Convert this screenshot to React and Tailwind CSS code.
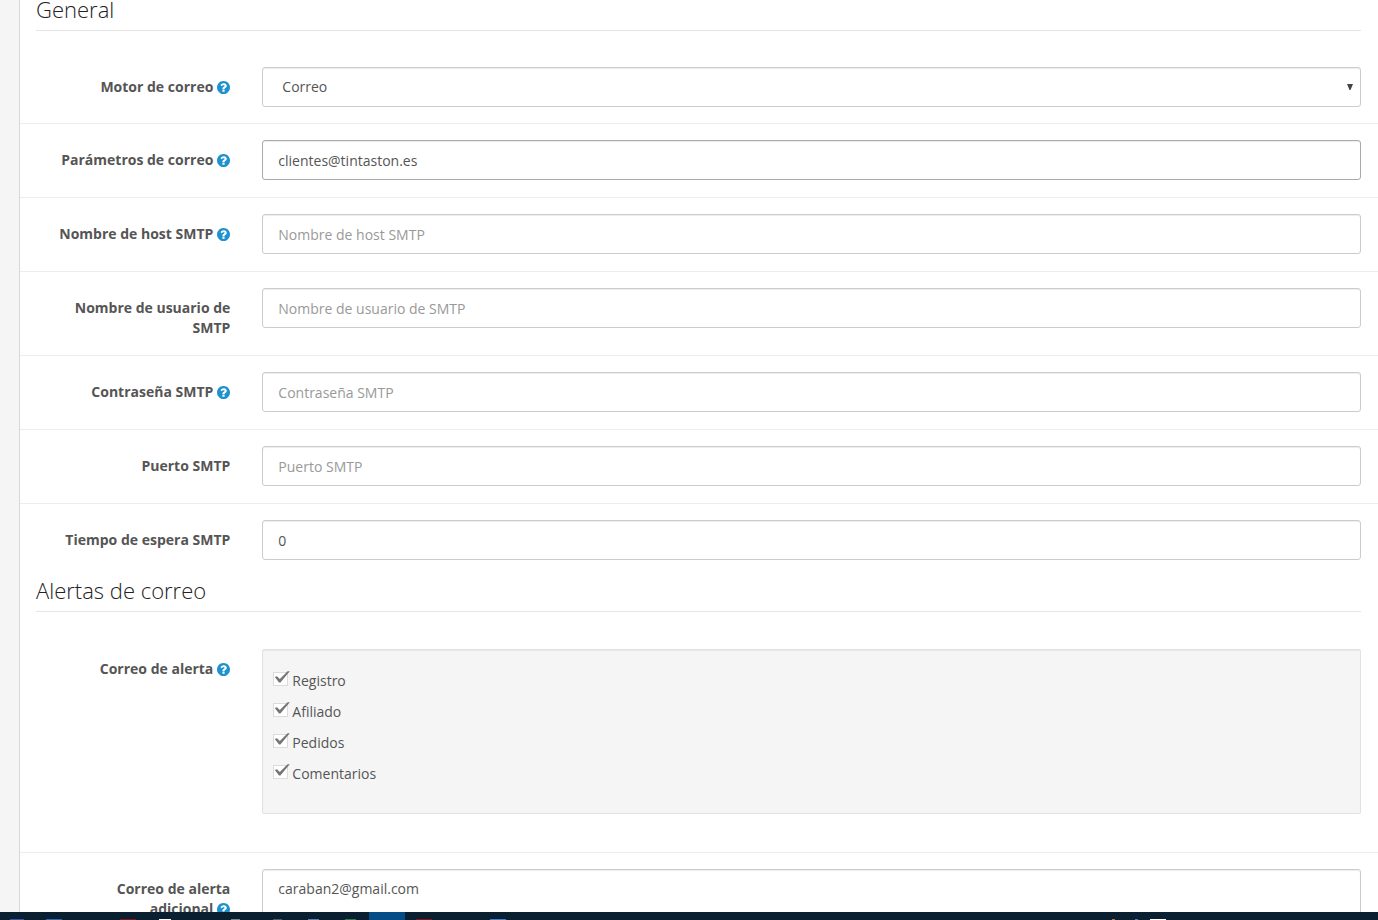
import React, { useState } from "react"

const smtpFields = [
  { id: "parameter", label: "Parámetros de correo", help: true, value: "clientes@tintaston.es", focused: true },
  { id: "host", label: "Nombre de host SMTP", help: true, placeholder: "Nombre de host SMTP" },
  { id: "username", label: "Nombre de usuario de SMTP", placeholder: "Nombre de usuario de SMTP" },
  { id: "password", label: "Contraseña SMTP", help: true, placeholder: "Contraseña SMTP" },
  { id: "port", label: "Puerto SMTP", placeholder: "Puerto SMTP" },
  { id: "timeout", label: "Tiempo de espera SMTP", value: "0" },
]

const alertOptions = ["Registro", "Afiliado", "Pedidos", "Comentarios"]

// Top edges of the taskbar icons
const taskbarLeft = [
  "ml-[10px] w-[14px] h-px bg-[#3f51a5]",
  "ml-[22px] w-[16px] h-px bg-[#2f66b5]",
  "ml-[58px] w-[16px] h-px bg-[#8c101a]",
  "ml-[23px] w-[12px] h-px bg-white",
  "ml-[60px] w-[9px] h-px bg-[#7b858c]",
  "ml-[33px] w-[9px] h-px bg-[#4f5d68]",
  "ml-[26px] w-[11px] h-px bg-[#5b7fae]",
  "ml-[26px] w-[11px] h-px bg-[#2f7a4a]",
  "ml-[13px] w-[36px] h-2 bg-[#044d86]",
  "ml-[11px] w-[16px] h-px bg-[#8c101a]",
  "ml-[58px] w-[16px] h-px bg-[#3f7ccb]",
]

const taskbarRight = [
  "w-[3px] h-px bg-[#b5793f]",
  "ml-[20px] w-[3px] h-px bg-[#5576b5]",
  "ml-[12px] w-[16px] h-px bg-white",
]

const inputClass =
  "block w-full h-10 rounded-[3px] border bg-white px-[15px] text-sm text-[#555] placeholder-[#999] shadow-[inset_0_1px_1px_rgba(0,0,0,0.075)] outline-none"

function HelpIcon() {
  return (
    <svg viewBox="128 128 1536 1536" className="inline-block size-[13px] ml-1 align-[-2px] fill-[#1e91cf]" aria-hidden="true">
      <path d="M1024 1376v-192q0-14-9-23t-23-9h-192q-14 0-23 9t-9 23v192q0 14 9 23t23 9h192q14 0 23-9t9-23zm256-672q0-88-55.5-163t-138.5-116-170-41q-243 0-371 213-15 24 8 42l132 100q7 6 19 6 16 0 25-12 53-68 86-92 34-24 86-24 48 0 85.5 26t37.5 59q0 38-20 61t-68 45q-63 28-115.5 86.5t-52.5 125.5v36q0 14 9 23t23 9h192q14 0 23-9t9-23q0-19 21.5-49.5t54.5-49.5q32-18 49-28.5t46-35 44.5-48 28-60.5 12.5-81zm384 192q0 209-103 385.5t-279.5 279.5-385.5 103-385.5-103-279.5-279.5-103-385.5 103-385.5 279.5-279.5 385.5-103 385.5 103 279.5 279.5 103 385.5z" />
    </svg>
  )
}

function Legend({ children }) {
  return (
    <h2 className="ml-4 mr-[17px] pb-3 border-b border-[#e5e5e5] text-[22px] leading-[18px] font-light text-[#222]">
      {children}
    </h2>
  )
}

function Row({ id, label, help, first, children }) {
  const Label = id ? "label" : "div"
  const words = label.split(" ")
  const lastWord = words.pop()

  return (
    <div className={`flex ${first ? "pt-9 pb-4" : "pt-4 pb-[17px] border-t border-[#ededed]"}`}>
      <Label htmlFor={id} className="w-1/6 shrink-0 px-4 pt-2.5 text-right text-sm leading-5 font-bold text-[#555]">
        {words.join(" ")}{" "}
        {/* keep the help icon on the same line as the last word */}
        <span className="whitespace-nowrap">
          {lastWord}
          {help && <HelpIcon />}
        </span>
      </Label>
      <div className="flex-1 min-w-0 pl-4 pr-[17px]">{children}</div>
    </div>
  )
}

function AlertCheckbox({ label }) {
  const [checked, setChecked] = useState(true)

  return (
    <label className="flex items-center gap-1 text-sm leading-5">
      <span className="relative block w-[15px] h-3.5 shrink-0 -mt-1">
        <input
          type="checkbox"
          checked={checked}
          onChange={() => setChecked(!checked)}
          className="block w-[15px] h-3.5 appearance-none border border-[#dcdcdc] bg-white"
        />
        {checked && (
          <svg viewBox="0 0 16 16" className="absolute left-px -top-0.5 size-4 pointer-events-none" aria-hidden="true">
            <path d="M0.8 7 3 6.2 5.8 9 13.6 1.200 15.8 1.200 6.400 12.600 5 12.600Z" fill="#757575" />
          </svg>
        )}
      </span>
      {label}
    </label>
  )
}

function App() {
  return (
    <div className="h-screen flex flex-col bg-[#f5f5f5] font-['Open_Sans',sans-serif] text-[#555]">
      <main className="flex-1 min-h-0 overflow-hidden ml-[19px] border-l border-[#d8d8d8] bg-white">
        <form>
          <Legend>General</Legend>
          <Row id="engine" label="Motor de correo" help first>
            <div className="relative">
              <select id="engine" className={`${inputClass} appearance-none border-[#ccc] pl-[19px]`}>
                <option>Correo</option>
              </select>
              <svg viewBox="0 0 6 6" className="absolute right-2 top-[17px] size-1.5 fill-[#444] pointer-events-none" aria-hidden="true">
                <path d="M0 0H6L3.500 6H2.500Z" />
              </svg>
            </div>
          </Row>
          {smtpFields.map((field) => (
            <Row key={field.id} id={field.id} label={field.label} help={field.help}>
              <input
                id={field.id}
                type="text"
                defaultValue={field.value}
                placeholder={field.placeholder}
                className={`${inputClass} ${field.focused ? "border-[#aaa]" : "border-[#ccc]"}`}
              />
            </Row>
          ))}

          <div className="pt-1">
            <Legend>Alertas de correo</Legend>
          </div>
          <div className="pt-px pb-[22px]">
            <Row label="Correo de alerta" help first>
              <div className="flex flex-col gap-[11px] h-[165px] rounded-[2px] border border-[#e1e1e1] bg-[#f5f5f5] pt-[21px] px-2.5 shadow-[inset_0_1px_1px_rgba(0,0,0,0.05)]">
                {alertOptions.map((option) => (
                  <AlertCheckbox key={option} label={option} />
                ))}
              </div>
            </Row>
          </div>
          <Row id="extra" label="Correo de alerta adicional" help>
            <textarea
              id="extra"
              rows={5}
              defaultValue="caraban2@gmail.com"
              className="block w-full rounded-[3px] border border-[#ccc] bg-white px-[15px] py-[9px] text-sm leading-5 text-[#555] shadow-[inset_0_1px_1px_rgba(0,0,0,0.075)] outline-none resize-none"
            />
          </Row>
        </form>
      </main>

      <footer className="h-2 shrink-0 flex justify-between bg-[#0a2030]">
        <div className="flex items-end">
          {taskbarLeft.map((item, index) => (
            <span key={index} className={item} />
          ))}
        </div>
        <div className="flex items-end pr-[212px]">
          {taskbarRight.map((item, index) => (
            <span key={index} className={item} />
          ))}
        </div>
      </footer>
    </div>
  )
}

export default App
